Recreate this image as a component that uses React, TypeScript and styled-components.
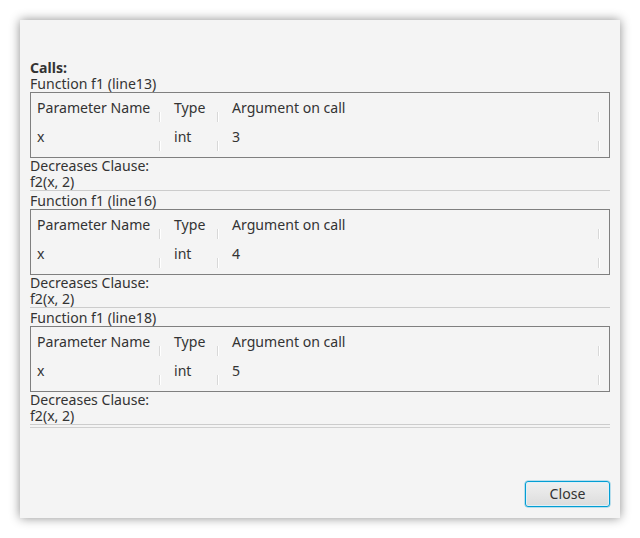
import React from "react";
import styled, { createGlobalStyle } from "styled-components";

const Global = createGlobalStyle`
  html, body { margin: 0; padding: 0; background: #ffffff; }
  body { font-family: "Noto Sans", "Open Sans", sans-serif; }
`;

const Page = styled.div`
  padding: 20px;
  width: 640px;
  height: 538px;
  box-sizing: border-box;
`;

const Dialog = styled.div`
  width: 600px;
  height: 498px;
  box-sizing: border-box;
  background: #f4f4f4;
  box-shadow: 0 0 10px rgba(0, 0, 0, 0.45);
  display: flex;
  flex-direction: column;
  padding: 40px 10px 11px 10px;
  color: #333333;
  font-size: 14.1px;
  line-height: 16px;
`;

const Content = styled.div`
  flex: 1;
  display: flex;
  flex-direction: column;
`;

const Heading = styled.div`
  font-weight: bold;
`;

const List = styled.div`
  display: flex;
  flex-direction: column;
  border-bottom: 1px solid #d0d0d0;
`;

const Section = styled.div`
  display: flex;
  flex-direction: column;
  padding-bottom: 2px;
`;

const Text = styled.div`
  white-space: nowrap;
`;

const Separator = styled.div`
  height: 1px;
  background: #cccccc;
`;

const Table = styled.div`
  border: 1px solid #7f7f7f;
  display: grid;
  grid-template-columns: 129px 58px 381px 1fr;
  grid-auto-rows: 29px;
  padding-bottom: 6px;
  box-sizing: content-box;
  height: 58px;
`;

const Cell = styled.div<{ $pad: number; $tick?: boolean }>`
  position: relative;
  display: flex;
  align-items: center;
  padding-left: ${(p) => p.$pad}px;
  white-space: nowrap;
  &::after {
    content: "";
    display: ${(p) => (p.$tick === false ? "none" : "block")};
    position: absolute;
    right: 0;
    bottom: 0;
    width: 1px;
    height: 10px;
    background: #d8d8d8;
    box-shadow: 1px 0 0 #ffffff;
  }
`;

const ButtonBar = styled.div`
  display: flex;
  justify-content: flex-end;
`;

const Button = styled.button`
  width: 85px;
  height: 26px;
  box-sizing: border-box;
  border: 1px solid #039ed3;
  border-radius: 3px;
  background: linear-gradient(#f0f0f0, #dcdcdc);
  box-shadow: inset 0 0 0 1px #dff0f8, 0 0 0 0.5px rgba(3, 158, 211, 0.5);
  font-family: "Noto Sans", "Open Sans", sans-serif;
  font-size: 14.1px;
  color: #333333;
  padding: 0;
  line-height: 16px;
`;

const calls = [
  { line: 13, arg: "3" },
  { line: 16, arg: "4" },
  { line: 18, arg: "5" },
];

export default function App() {
  return (
    <>
      <Global />
      <Page>
        <Dialog>
          <Content>
            <Heading>Calls:</Heading>
            <List>
              {calls.map((c, i) => (
                <Section key={i}>
                  <Text>Function f1 (line{c.line})</Text>
                  <Table>
                    <Cell $pad={6}>Parameter Name</Cell>
                    <Cell $pad={14}>Type</Cell>
                    <Cell $pad={14}>Argument on call</Cell>
                    <Cell $pad={0} $tick={false} />
                    <Cell $pad={6}>x</Cell>
                    <Cell $pad={14}>int</Cell>
                    <Cell $pad={14}>{c.arg}</Cell>
                    <Cell $pad={0} $tick={false} />
                  </Table>
                  <Text>Decreases Clause:</Text>
                  <Text>f2(x, 2)</Text>
                  <Separator />
                </Section>
              ))}
            </List>
          </Content>
          <ButtonBar>
            <Button>Close</Button>
          </ButtonBar>
        </Dialog>
      </Page>
    </>
  );
}
